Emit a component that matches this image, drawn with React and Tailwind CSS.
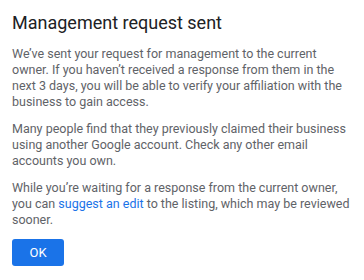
export default function App() {
  return (
    <div className="w-[364px] h-[280px] bg-white pl-3 pt-[10px]" style={{ fontFamily: "Roboto, sans-serif" }}>
      <h1 className="text-[18px] leading-[26px] text-[#202124]">Management request sent</h1>
      <div className="mt-[10px] text-[12.5px] leading-[16px] text-[#5f6368] whitespace-nowrap">
        <p>We’ve sent your request for management to the current<br />owner. If you haven’t received a response from them in the<br />next 3 days, you will be able to verify your affiliation with the<br />business to gain access.</p>
        <p className="mt-[11px]">Many people find that they previously claimed their business<br />using another Google account. Check any other email<br />accounts you own.</p>
        <p className="mt-[11px]">While you’re waiting for a response from the current owner,<br />you can <span className="text-[#1a73e8]">suggest an edit</span> to the listing, which may be reviewed<br />sooner.</p>
      </div>
      <button className="mt-[11px] w-[52px] h-[27px] rounded-[3px] bg-[#1a73e8] text-white text-[13px]">OK</button>
    </div>
  );
}
